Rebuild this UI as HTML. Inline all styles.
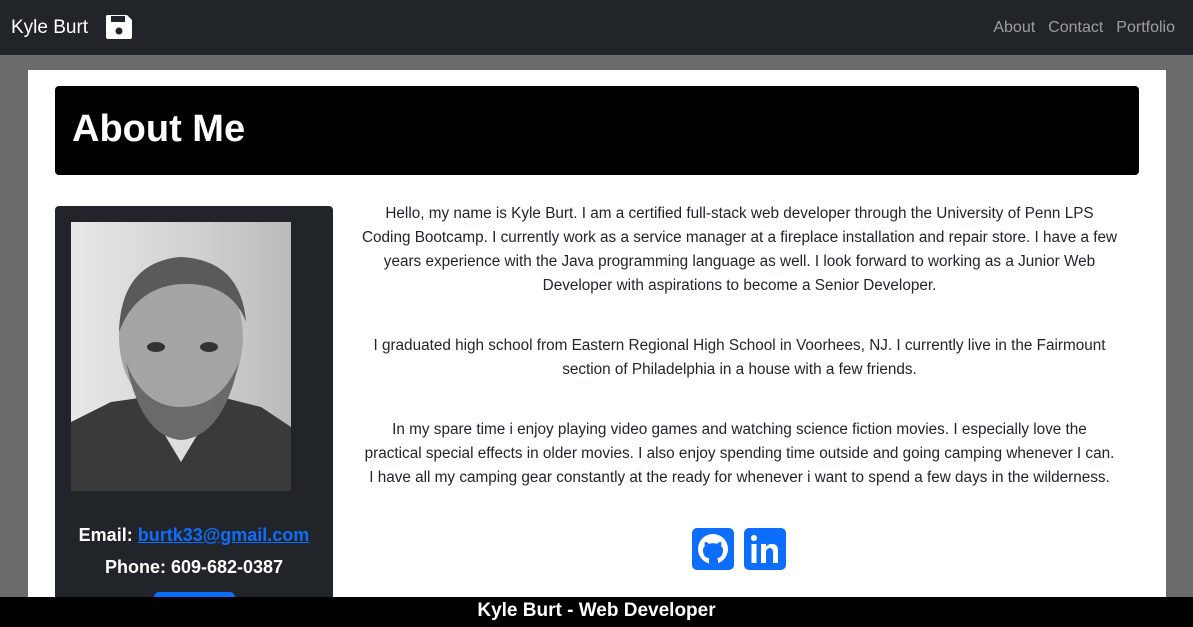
<!DOCTYPE html>
<html><head><style>
*{box-sizing:border-box;margin:0;padding:0}
body{width:1193px;height:627px;overflow:hidden;background:#6b6b6b;font-family:"Liberation Sans",sans-serif;position:relative}
.nav{position:absolute;left:0;top:0;width:1193px;height:55px;background:#212529}
.brand{position:absolute;left:11px;top:17px;color:#fff;font-size:19px}
.links{position:absolute;right:18px;top:19px;color:rgba(255,255,255,.55);font-size:16px}
.links span{margin-left:13px}
.main{position:absolute;left:28px;top:70px;width:1138px;height:527px;background:#fff}
.hdr{position:absolute;left:55px;top:86px;width:1084px;height:89px;background:#000;border-radius:4px}
.hdr h1{position:absolute;left:17px;top:22px;color:#fff;font-size:38px;font-weight:bold}
.card{position:absolute;left:55px;top:206px;width:278px;height:420px;background:#212529;border-radius:4px}
.photo{position:absolute;left:71px;top:222px;width:220px;height:269px;overflow:hidden;background:linear-gradient(90deg,#e8e8e8,#cfcfcf 60%,#bbb)}
.info{position:absolute;left:55px;width:278px;text-align:center;color:#fff;font-weight:bold;font-size:18px}
.info a{color:#0d6efd;text-decoration:underline}
.btn{position:absolute;left:154px;top:592px;width:81px;height:20px;background:#0d6efd;border-radius:5px}
.txt{position:absolute;left:340px;width:799px;text-align:center;color:#212529;font-size:15.3px;line-height:24px;padding:0 20px}
.foot{position:absolute;left:0;top:597px;width:1193px;height:30px;background:#000;color:#fff;text-align:center;font-weight:bold;font-size:19px;line-height:27px}
.ic{position:absolute;top:528px;width:42px;height:42px;background:#0d6efd;border-radius:5px}
</style></head><body>
<div class="nav"><div class="brand">Kyle Burt
<svg style="position:absolute;left:93px;top:-5px" width="30" height="30" viewBox="0 0 30 30"><path d="M3 3h20l5 5v17a2 2 0 0 1-2 2H4a2 2 0 0 1-2-2V5a2 2 0 0 1 1-2z" fill="#fff"/><rect x="7" y="4" width="14" height="6" fill="#212529"/><circle cx="15" cy="19" r="3.5" fill="#212529"/></svg></div>
<div class="links"><span>About</span><span>Contact</span><span>Portfolio</span></div></div>
<div class="main"></div>
<div class="hdr"><h1>About Me</h1></div>
<div class="card"></div>
<div class="photo"><svg width="220" height="269" viewBox="0 0 220 269">
<path d="M0 200 L40 180 L75 175 L110 205 L150 175 L190 185 L220 205 V269 H0z" fill="#3a3a3a"/>
<path d="M80 190 L110 240 L140 190z" fill="#ddd"/>
<ellipse cx="110" cy="115" rx="62" ry="80" fill="#a5a5a5"/>
<path d="M48 110 Q50 40 110 35 Q170 38 175 100 Q160 60 110 62 Q65 65 48 110z" fill="#5a5a5a"/>
<path d="M55 140 Q70 215 110 218 Q152 215 168 140 Q150 185 110 185 Q72 185 55 140z" fill="#6a6a6a"/>
<ellipse cx="85" cy="125" rx="9" ry="5" fill="#333"/><ellipse cx="138" cy="125" rx="9" ry="5" fill="#333"/>
</svg></div>
<div class="info" style="top:525px">Email: <a>burtk33@gmail.com</a></div>
<div class="info" style="top:557px">Phone: 609-682-0387</div>
<div class="btn"></div>
<div class="txt" style="top:202px">Hello, my name is Kyle Burt. I am a certified full-stack web developer through the University of Penn LPS Coding Bootcamp. I currently work as a service manager at a fireplace installation and repair store. I have a few years experience with the Java programming language as well. I look forward to working as a Junior Web Developer with aspirations to become a Senior Developer.</div>
<div class="txt" style="top:334px;padding:0 18px">I graduated high school from Eastern Regional High School in Voorhees, NJ. I currently live in the Fairmount section of Philadelphia in a house with a few friends.</div>
<div class="txt" style="top:418px;padding:0;white-space:nowrap">In my spare time i enjoy playing video games and watching science fiction movies. I especially love the<br>practical special effects in older movies. I also enjoy spending time outside and going camping whenever I can.<br>I have all my camping gear constantly at the ready for whenever i want to spend a few days in the wilderness.</div>
<div class="ic" style="left:692px"><svg width="42" height="42" viewBox="0 0 42 42"><circle cx="21" cy="21" r="15" fill="#fff"/><path d="M17 36v-6c-3 0-6-2-6-8 0-2 1-3 2-4-1-2 0-4 0-4 2 0 3 1 4 2 2-1 6-1 8 0 1-1 2-2 4-2 0 0 1 2 0 4 1 1 2 2 2 4 0 6-3 8-6 8 1 1 1 2 1 3v3z" fill="#0d6efd"/></svg></div>
<div class="ic" style="left:744px"><svg width="42" height="42" viewBox="0 0 42 42"><circle cx="10" cy="10" r="3" fill="#fff"/><rect x="7.5" y="16" width="5" height="19" fill="#fff"/><path d="M17 16h5v3c1-2 3-3 6-3 4 0 6 2 6 7v12h-5V24c0-2-1-4-3-4s-4 2-4 4v11h-5z" fill="#fff"/></svg></div>
<div class="foot">Kyle Burt - Web Developer</div>
</body></html>
